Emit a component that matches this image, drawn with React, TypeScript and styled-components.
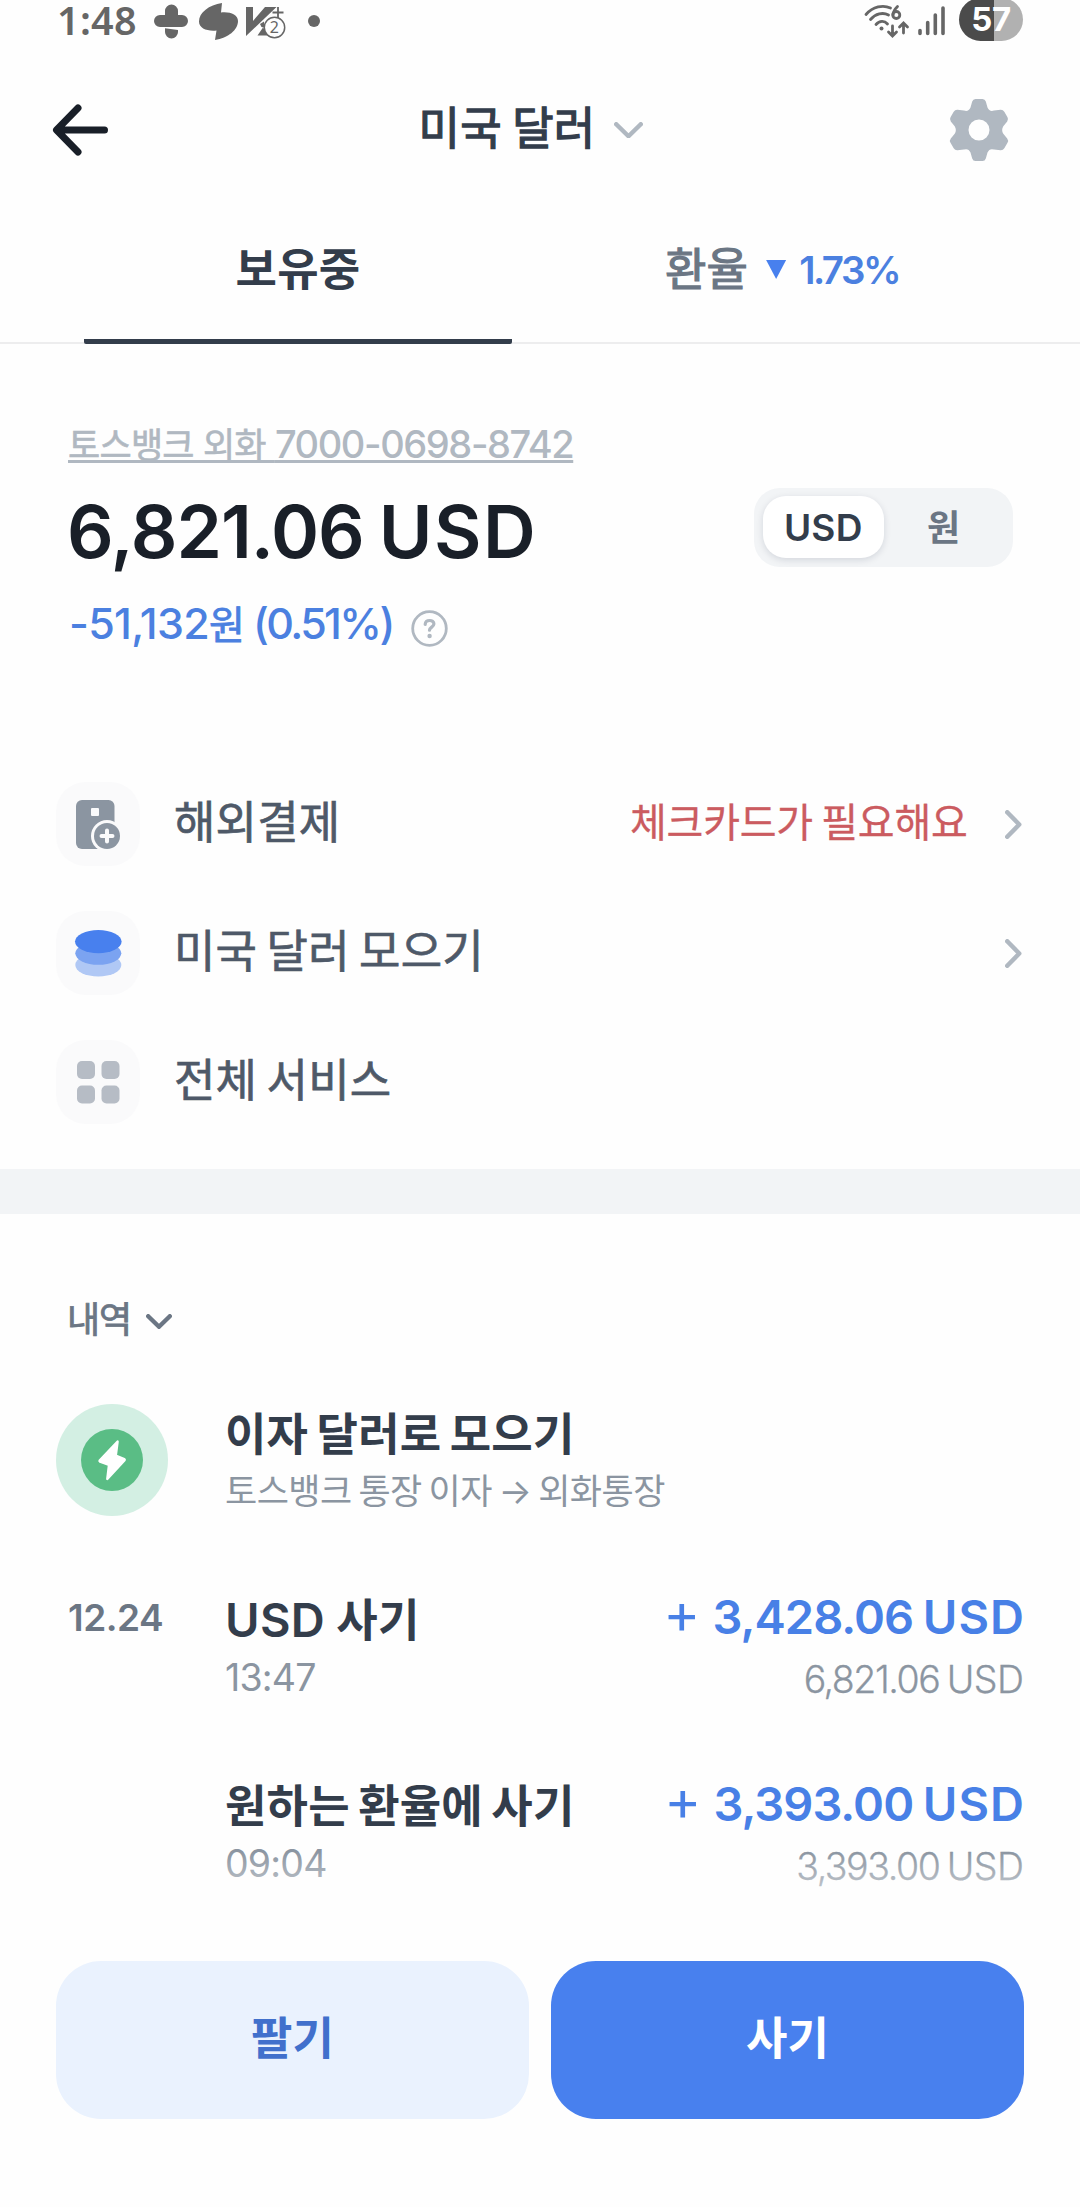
import React from 'react';
import styled, { createGlobalStyle } from 'styled-components';

const GlobalStyle = createGlobalStyle`
  *, *::before, *::after { box-sizing: border-box; }
  body {
    margin: 0;
    background: #fefefe;
    font-family: Inter, "Noto Sans CJK KR", sans-serif;
    letter-spacing: 0.2px;
    word-spacing: -2.5px;
  }
  button { border: 0; padding: 0; background: none; font: inherit; color: inherit; letter-spacing: inherit; word-spacing: inherit; }
`;

const Screen = styled.div`
  width: 1080px;
  height: 2207px;
  overflow: hidden;
  display: flex;
  flex-direction: column;
  background: #fefefe;
`;

/* ---------- status bar ---------- */

const StatusBar = styled.div`
  flex: none;
  height: 42px;
  padding: 0 57px 0 57px;
  display: flex;
  justify-content: space-between;
`;

const StatusGroup = styled.div`
  display: flex;
  align-items: flex-start;
`;

const Clock = styled.span`
  width: 97px;
  font: 600 39.5px/41px "Noto Sans", sans-serif;
  letter-spacing: 0.3px;
  color: #666;
`;

const Battery = styled.span`
  width: 64px;
  height: 43px;
  margin: -2px 0 0 14px;
  border-radius: 22px;
  background: linear-gradient(90deg, #4b4b4b 0 35.5px, #b1b1b1 35.5px);
  color: #fff;
  font-weight: 700;
  font-size: 33px;
  line-height: 42px;
  letter-spacing: -0.5px;
  text-align: center;
`;

/* ---------- header ---------- */

const Header = styled.header`
  flex: none;
  height: 176px;
  padding: 0 70px 0 52px;
  display: grid;
  grid-template-columns: 200px 1fr 200px;
  align-items: center;
  & > :last-child { justify-self: end; }
`;

const TitleButton = styled.button`
  display: flex;
  align-items: center;
  justify-content: center;
  gap: 19px;
`;

const Title = styled.h1`
  margin: 0 0 2px;
  font-size: 45px;
  line-height: 56px;
  font-weight: 400;
  -webkit-text-stroke: 1.3px #333d4b;
  color: #333d4b;
`;

/* ---------- tabs ---------- */

const Tabs = styled.nav`
  flex: none;
  height: 126px;
  padding: 0 84px;
  display: grid;
  grid-template-columns: 1fr 1fr;
  column-gap: 56px;
  box-shadow: inset 0 -2px #ededee;
`;

const Tab = styled.button<{ $active?: boolean }>`
  display: flex;
  align-items: center;
  justify-content: center;
  padding-bottom: ${p => (p.$active ? 18 : 23)}px;
  border-bottom: ${p => (p.$active ? '5px solid #333d4b' : '0')};
  border-radius: 2px;
  font-size: 45px;
  line-height: 56px;
  font-weight: ${p => (p.$active ? 700 : 400)};
  -webkit-text-stroke: ${p => (p.$active ? '0' : '1.2px #6b7684')};
  color: ${p => (p.$active ? '#333d4b' : '#6b7684')};
`;

const Falling = styled.span`
  width: 20px;
  height: 19px;
  margin: 0 13px 0 18px;
  background: #4880ee;
  clip-path: polygon(0 0, 100% 0, 50% 100%);
`;

const Rate = styled.span`
  font-size: 38.5px;
  font-weight: 600;
  letter-spacing: -2.5px;
  -webkit-text-stroke: 0;
  color: #4b80e0;
`;

/* ---------- money ---------- */

const Digits = styled.span<{ $track: number }>`
  letter-spacing: ${p => p.$track}em;
`;

const Unit = styled.span<{ $track: number }>`
  letter-spacing: ${p => p.$track}em;
  word-spacing: -0.07em;
  margin-right: ${p => -p.$track}em;
  white-space: pre;
`;

/* ---------- balance ---------- */

const Summary = styled.section`
  flex: none;
  padding: 80px 67px 0 68px;
`;

const Account = styled.div`
  height: 40px;
  line-height: 40px;
  font-size: 35px;
  letter-spacing: -0.75px;
  word-spacing: 0;
  -webkit-text-stroke: 0.6px #b0b8c1;
  color: #b0b8c1;
  text-decoration: underline 3px;
  text-underline-offset: 2px;
  text-decoration-skip-ink: none;
`;

const AccountNumber = styled.span`
  font-size: 38px;
  font-weight: 500;
  letter-spacing: -1.4px;
  -webkit-text-stroke: 0;
`;

const BalanceRow = styled.div`
  display: flex;
  align-items: flex-start;
  justify-content: space-between;
  height: 87px;
  margin-top: 24px;
`;

const Balance = styled.div`
  margin-left: -1px;
  font-size: 73px;
  line-height: 87px;
  font-weight: 600;
  color: #191f28;
`;

const Toggle = styled.div`
  display: flex;
  width: 259px;
  height: 79px;
  padding: 8px 9px 9px;
  border-radius: 26px;
  background: #f2f4f6;
`;

const ToggleOption = styled.button<{ $on?: boolean }>`
  flex: 1;
  border-radius: 23px;
  line-height: 64px;
  font-size: ${p => (p.$on ? 37 : 36)}px;
  font-weight: ${p => (p.$on ? 600 : 700)};
  color: ${p => (p.$on ? '#333d4b' : '#6b7684')};
  background: ${p => (p.$on ? '#fff' : 'transparent')};
  box-shadow: ${p => (p.$on ? '0 2px 7px rgba(0, 23, 51, 0.13)' : 'none')};
`;

const Change = styled.div`
  display: flex;
  align-items: center;
  height: 48px;
  margin: 25px 0 0 1px;
  font-size: 43px;
  line-height: 48px;
  font-weight: 500;
  letter-spacing: -0.7px;
  word-spacing: -2px;
  color: #4b80e0;
  & svg { margin: 8px 0 0 18px; }
`;

const Won = styled.span`
  font-size: 39px;
  font-weight: 400;
  -webkit-text-stroke: 0.8px #4b80e0;
`;

const Percent = styled.span`
  letter-spacing: -2.6px;
`;

/* ---------- services ---------- */

const Services = styled.ul`
  flex: none;
  margin: 0;
  padding: 134px 56px 45px;
  list-style: none;
  display: flex;
  flex-direction: column;
  gap: 45px;
`;

const Service = styled.li`
  display: flex;
  align-items: center;
  height: 84px;
`;

const Tile = styled.span`
  display: grid;
  place-items: center;
  width: 84px;
  height: 84px;
  margin-right: 34px;
  border-radius: 30px;
  background: #fafafb;
`;

const ServiceName = styled.span`
  flex: 1;
  padding-bottom: 3px;
  font-size: 45px;
  line-height: 56px;
  word-spacing: -3.5px;
  -webkit-text-stroke: 0.7px #4e5968;
  color: #4e5968;
`;

const Notice = styled.span`
  padding-bottom: 3px;
  margin-right: 37px;
  font-size: 40px;
  line-height: 56px;
  letter-spacing: -0.25px;
  -webkit-text-stroke: 0.3px #cb5b60;
  color: #cb5b60;
`;

const Band = styled.div`
  flex: none;
  height: 45px;
  background: #f2f4f6;
`;

/* ---------- history ---------- */

const History = styled.section`
  flex: none;
  height: 678px;
  padding: 86px 56px 0;
`;

const Filter = styled.button`
  display: flex;
  align-items: center;
  gap: 15px;
  height: 40px;
  margin: 0 0 -1px 11px;
  font-size: 36px;
  line-height: 40px;
  letter-spacing: -1.2px;
  -webkit-text-stroke: 0.8px #6b7684;
  color: #6b7684;
  & svg { margin-top: 2px; }
`;

const Entry = styled.div<{ $gap: number }>`
  display: flex;
  align-items: center;
  height: 114px;
  margin-top: ${p => p.$gap}px;
`;

const Lead = styled.div`
  width: 169px;
  height: 114px;
  font-size: 37px;
  line-height: 53px;
  font-weight: 600;
  letter-spacing: -0.5px;
  padding-left: 12px;
  color: #6b7684;
`;

const Badge = styled.span`
  display: grid;
  place-items: center;
  width: 112px;
  height: 112px;
  margin: -2px 0 0 -12px;
  border-radius: 50%;
  background: #d3efe3;
`;

const Body = styled.div`
  flex: 1;
  line-height: 57px;
`;

const EntryTitle = styled.div`
  font-size: 45px;
  font-weight: 700;
  color: #333d4b;
`;

const Currency = styled.span`
  margin-right: 3px;
  font-size: 47px;
  font-weight: 600;
  letter-spacing: 0.3px;
`;

const EntryNote = styled.div<{ $time?: boolean }>`
  font-size: ${p => (p.$time ? 37.5 : 35)}px;
  letter-spacing: ${p => (p.$time ? -0.8 : -0.55)}px;
  color: #8b95a1;
`;

const Figures = styled.div`
  display: flex;
  flex-direction: column;
  align-items: flex-end;
  line-height: 63px;
`;

const Credit = styled.div`
  display: flex;
  font-size: 47px;
  font-weight: 600;
  color: #4880e6;
`;

const Plus = styled.span`
  margin: -3px 12px 3px 0;
  font-weight: 400;
  font-size: 56px;
`;

const After = styled.div`
  font-size: 37.5px;
  font-weight: 300;
  -webkit-text-stroke: 0.3px #8b95a1;
  color: #8b95a1;
`;

/* ---------- actions ---------- */

const Actions = styled.footer`
  position: relative;
  flex: none;
  display: grid;
  grid-template-columns: 1fr 1fr;
  gap: 22px;
  margin-top: 43px;
  padding: 26px 56px 88px;
  &::before {
    content: '';
    position: absolute;
    left: 0;
    right: 0;
    bottom: 100%;
    height: 84px;
    background: linear-gradient(rgba(254, 254, 254, 0), #fefefe);
  }
`;

const ActionButton = styled.button<{ $primary?: boolean }>`
  height: 158px;
  padding-bottom: 2px;
  border-radius: 45px;
  font-size: 45px;
  line-height: 56px;
  font-weight: 700;
  color: ${p => (p.$primary ? '#fff' : '#4170cc')};
  background: ${p => (p.$primary ? '#4880ee' : '#eaf2fe')};
`;

/* ---------- icons ---------- */

const Notifications = () => (
  <svg width="168" height="42" viewBox="154 0 168 42" fill="#666">
    <path d="M165 11a6.5 6.5 0 0 1 13 0v4h4a6 6 0 0 1 0 12h-22a6 6 0 0 1 0-12h5z" />
    <path d="M165 28.3l13 1.6v2a6.5 6.5 0 0 1-13 0z" />
    <path d="M222 3l-1 9.5c9-1 17 2 17 8.500c0 9-10 17-23 19l1.500-9.500c-9 1-17.500-2-17.500-9c0-9 10-16.500 23-18.500z" />
    <path d="M246 7h7v14l12-14h11.500L246 36z" />
    <path d="M257.500 35.500l5.500-8 5.500 8zM260 24l4-2.500v6l-2.500-.5z" />
    <path d="M272.500 12.500h11M278 7v11" stroke="#666" strokeWidth="1.8" />
    <circle cx="274.500" cy="27.500" r="10.200" fill="#fefefe" stroke="#666" strokeWidth="1.500" />
    <text x="274.500" y="33" textAnchor="middle" fontSize="16" fontFamily="Noto Sans" wordSpacing="0">2</text>
    <circle cx="314" cy="21" r="6" />
  </svg>
);

const Connectivity = () => (
  <svg width="81" height="42" viewBox="864 0 81 42" fill="none" stroke="#666" strokeWidth="2.8" strokeLinecap="round">
    <path d="M866 14.500c7-8 17-10 24.500-6.500M870.500 19.500c5-6 12.500-7.500 18-4.500M876 24.500c3.500-4 8.500-4 11.500-.5" />
    <circle cx="881.500" cy="28.500" r="2" fill="#666" stroke="none" />
    <path d="M897.500 6.500c-3 3-4.500 6-4.500 8.500" />
    <circle cx="896.300" cy="15" r="3.500" />
    <path d="M892.500 26v9.500m-4-3.500l4 4 4-4M903.500 33v-9.500m-4 3.500l4-4 4 4" />
    <path strokeWidth="3.600" d="M920 30.500v3M927.700 22.500v11M935.300 15v18.500M943 8v25.500" />
  </svg>
);

const BackArrow = () => (
  <svg width="58" height="54" viewBox="0 0 58 54" fill="none" stroke="#191f28" strokeWidth="7" strokeLinecap="round" strokeLinejoin="round">
    <path d="M26 5L4.500 27 26 49M5 27h47.500" />
  </svg>
);

const Chevron = ({ dir, w, color, stroke }: { dir: 'down' | 'right'; w: number; color: string; stroke: number }) => {
  const h = w / 2 + 2;
  const s = stroke / 2;
  return dir === 'down' ? (
    <svg width={w} height={h} fill="none" stroke={color} strokeWidth={stroke} strokeLinecap="round" strokeLinejoin="round">
      <path d={`M${s} ${s}L${w / 2} ${h - s}L${w - s} ${s}`} />
    </svg>
  ) : (
    <svg width={h + 3} height={w} fill="none" stroke={color} strokeWidth={stroke} strokeLinecap="round" strokeLinejoin="round">
      <path d={`M${s} ${s}L${h - s} ${w / 2}L${s} ${w - s}`} />
    </svg>
  );
};

const Gear = () => (
  <svg width="62" height="62" viewBox="-31 -31 62 62">
    <path
      fill="#b0b8c1"
      fillRule="evenodd"
      d="M-3.500-31H3.500Q6-31 6.800-28.500L8.500-22.500Q10.500-18 15-19.500L21.500-20.300Q24-20.500 25.300-18.300L28.500-12.800Q29.800-10.500 28.200-8.500L24.300-3.800Q22-0 24.300 3.800L28.200 8.500Q29.800 10.500 28.500 12.800L25.300 18.300Q24 20.500 21.500 20.300L15 19.500Q10.500 18 8.500 22.500L6.800 28.500Q6 31 3.500 31H-3.500Q-6 31-6.800 28.500L-8.500 22.500Q-10.500 18-15 19.500L-21.500 20.300Q-24 20.500-25.300 18.300L-28.500 12.800Q-29.800 10.500-28.200 8.500L-24.300 3.800Q-22 0-24.300-3.800L-28.200-8.500Q-29.800-10.500-28.500-12.800L-25.300-18.300Q-24-20.500-21.500-20.300L-15-19.500Q-10.500-18-8.500-22.500L-6.800-28.500Q-6-31-3.500-31ZM0-10.500A10.500 10.500 0 1 0 0 10.500 10.500 10.500 0 1 0 0-10.500Z"
    />
  </svg>
);

const HelpIcon = () => (
  <svg width="37" height="37" viewBox="0 0 37 37" fill="none" stroke="#b0b8c1" strokeWidth="2.800" strokeLinecap="round">
    <circle cx="18.500" cy="18.500" r="16.800" />
    <path strokeWidth="3.200" d="M14.200 14.300c.3-5 8.800-5 8.700-.3c-.1 3-4.300 3.200-4.400 6.200" />
    <circle cx="18.600" cy="26" r="2.200" fill="#b0b8c1" stroke="none" />
  </svg>
);

const CardIcon = () => (
  <svg width="84" height="84" viewBox="0 0 84 84">
    <rect x="20" y="18" width="38.500" height="49" rx="6" fill="#8b95a1" />
    <rect x="35" y="26" width="8" height="8" rx="1" fill="#fafafb" />
    <circle cx="51" cy="54" r="16" fill="#fafafb" />
    <circle cx="51" cy="54" r="13" fill="#8b95a1" />
    <path d="M51 48.500v11M45.500 54h11" stroke="#fafafb" strokeWidth="4" strokeLinecap="round" />
  </svg>
);

const CoinsIcon = () => (
  <svg width="84" height="84" viewBox="0 0 84 84">
    <ellipse cx="42.300" cy="54" rx="23" ry="11.500" fill="#b0c8f5" />
    <ellipse cx="42.300" cy="42.300" rx="23" ry="11.500" fill="#7ba3f1" />
    <ellipse cx="42.300" cy="30.600" rx="23.300" ry="11.600" fill="#4880ee" />
  </svg>
);

const GridIcon = () => (
  <svg width="84" height="84" viewBox="0 0 84 84" fill="#b6bcc5">
    <rect x="21" y="21" width="18" height="18" rx="5" />
    <rect x="45.500" y="21" width="18" height="18" rx="5" />
    <rect x="21" y="45.500" width="18" height="18" rx="5" />
    <rect x="45.500" y="45.500" width="18" height="18" rx="5" />
  </svg>
);

const BoltIcon = () => (
  <svg width="62" height="62" viewBox="0 0 62 62">
    <circle cx="31" cy="31" r="31" fill="#5abd85" />
    <path
      d="M36.600 12.500L18.600 31.500Q18.300 32.200 19 32.600L28 36L26.300 50L43.600 31.200Q44 30.400 43.300 30L34.800 26.600Z"
      fill="#fff"
      stroke="#fff"
      strokeWidth="2.400"
      strokeLinejoin="round"
    />
  </svg>
);

/* ---------- data ---------- */

const services = [
  { name: '해외결제', icon: <CardIcon />, notice: '체크카드가 필요해요', link: true },
  { name: '미국 달러 모으기', icon: <CoinsIcon />, link: true },
  { name: '전체 서비스', icon: <GridIcon />, link: false },
];

const trades = [
  { date: '12.24', currency: 'USD', title: ' 사기', time: '13:47', amount: '3,428.06', after: '6,821.06', gap: 71 },
  { date: '', currency: '', title: '원하는 환율에 사기', time: '09:04', amount: '3,393.00', after: '3,393.00', gap: 73 },
];

const Money = ({ value, track, unitTrack }: { value: string; track: number; unitTrack: number }) => (
  <span>
    <Digits $track={track}>{value}</Digits>
    <Unit $track={unitTrack}> USD</Unit>
  </span>
);

export default function App() {
  return (
    <Screen>
      <GlobalStyle />
      <StatusBar>
        <StatusGroup>
          <Clock>1:48</Clock>
          <Notifications />
        </StatusGroup>
        <StatusGroup>
          <Connectivity />
          <Battery>57</Battery>
        </StatusGroup>
      </StatusBar>

      <Header>
        <BackArrow />
        <TitleButton>
          <Title>미국 달러</Title>
          <Chevron dir="down" w={29} color="#b0b8c1" stroke={4.5} />
        </TitleButton>
        <Gear />
      </Header>

      <Tabs>
        <Tab $active>보유중</Tab>
        <Tab>
          환율
          <Falling />
          <Rate>1.73%</Rate>
        </Tab>
      </Tabs>

      <Summary>
        <Account>
          토스뱅크 외화 <AccountNumber>7000-0698-8742</AccountNumber>
        </Account>
        <BalanceRow>
          <Balance>
            <Money value="6,821.06" track={-0.014} unitTrack={0.022} />
          </Balance>
          <Toggle>
            <ToggleOption $on>USD</ToggleOption>
            <ToggleOption>원</ToggleOption>
          </Toggle>
        </BalanceRow>
        <Change>
          <span>
            -51,132<Won>원</Won> <Percent>(0.51%)</Percent>
          </span>
          <HelpIcon />
        </Change>
      </Summary>

      <Services>
        {services.map(s => (
          <Service key={s.name}>
            <Tile>{s.icon}</Tile>
            <ServiceName>{s.name}</ServiceName>
            {s.notice && <Notice>{s.notice}</Notice>}
            {s.link && <Chevron dir="right" w={29} color="#b0b8c1" stroke={4.5} />}
          </Service>
        ))}
      </Services>

      <Band />

      <History>
        <Filter>
          내역
          <Chevron dir="down" w={26} color="#6b7684" stroke={4.4} />
        </Filter>
        <Entry $gap={67}>
          <Lead>
            <Badge>
              <BoltIcon />
            </Badge>
          </Lead>
          <Body>
            <EntryTitle>이자 달러로 모으기</EntryTitle>
            <EntryNote>토스뱅크 통장 이자 → 외화통장</EntryNote>
          </Body>
        </Entry>
        {trades.map(t => (
          <Entry key={t.time} $gap={t.gap}>
            <Lead>{t.date}</Lead>
            <Body>
              <EntryTitle>
                {t.currency && <Currency>{t.currency}</Currency>}
                {t.title}
              </EntryTitle>
              <EntryNote $time>{t.time}</EntryNote>
            </Body>
            <Figures>
              <Credit>
                <Plus>+</Plus>
                <Money value={t.amount} track={-0.02} unitTrack={0.022} />
              </Credit>
              <After>
                <Money value={t.after} track={-0.038} unitTrack={-0.014} />
              </After>
            </Figures>
          </Entry>
        ))}
      </History>

      <Actions>
        <ActionButton>팔기</ActionButton>
        <ActionButton $primary>사기</ActionButton>
      </Actions>
    </Screen>
  );
}
